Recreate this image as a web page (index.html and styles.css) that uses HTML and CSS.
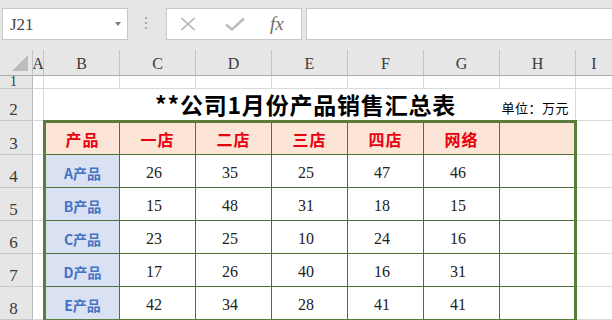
FILE: index.html
```html
<!DOCTYPE html>
<html lang="zh-CN">
<head>
<meta charset="utf-8">
<title>销售汇总表</title>
<link rel="stylesheet" href="styles.css">
</head>
<body>
<div class="toolbar">
  <div class="namebox"><span class="ref">J21</span><span class="caret"></span></div>
  <div class="dots"><i></i><i></i><i></i></div>
  <div class="fbox">
    <svg class="ic-x" width="16" height="14" viewBox="0 0 16 14"><path d="M1.5 1 L14.5 13 M14.5 1 L1.5 13" stroke="#b5b5b5" stroke-width="1.7" fill="none"/></svg>
    <svg class="ic-ok" width="20" height="14" viewBox="0 0 20 14"><path d="M1 7.5 L7 12.5 L19 1.5" stroke="#bcbcbc" stroke-width="2.4" fill="none"/></svg>
    <span class="fx">fx</span>
  </div>
  <div class="finput"></div>
</div>
<div class="sheet">
  <div class="corner"><span class="tri"></span></div>
  <div class="ch">A</div><div class="ch">B</div><div class="ch">C</div><div class="ch">D</div><div class="ch">E</div><div class="ch">F</div><div class="ch">G</div><div class="ch">H</div><div class="ch">I</div>

  <div class="rh r1">1</div>
  <div class="c"></div><div class="c"></div><div class="c"></div><div class="c"></div><div class="c"></div><div class="c"></div><div class="c"></div><div class="c"></div><div class="c"></div>

  <div class="rh">2</div>
  <div class="c"></div>
  <div class="c merged"><span></span><span class="title">**公司1月份产品销售汇总表</span><span class="unit">单位：万元</span></div>
  <div class="c"></div>

  <div class="rh">3</div><div class="c"></div><div class="c"></div>
  <div class="rh">4</div><div class="c"></div><div class="c"></div>
  <div class="rh">5</div><div class="c"></div><div class="c"></div>
  <div class="rh">6</div><div class="c"></div><div class="c"></div>
  <div class="rh">7</div><div class="c"></div><div class="c"></div>
  <div class="rh">8</div><div class="c"></div><div class="c"></div>

  <div class="table">
    <div class="t hd">产品</div><div class="t hd">一店</div><div class="t hd">二店</div><div class="t hd">三店</div><div class="t hd">四店</div><div class="t hd">网络</div><div class="t hd"></div>
    <div class="t pr">A产品</div><div class="t n">26</div><div class="t n">35</div><div class="t n">25</div><div class="t n">47</div><div class="t n">46</div><div class="t"></div>
    <div class="t pr">B产品</div><div class="t n">15</div><div class="t n">48</div><div class="t n">31</div><div class="t n">18</div><div class="t n">15</div><div class="t"></div>
    <div class="t pr">C产品</div><div class="t n">23</div><div class="t n">25</div><div class="t n">10</div><div class="t n">24</div><div class="t n">16</div><div class="t"></div>
    <div class="t pr">D产品</div><div class="t n">17</div><div class="t n">26</div><div class="t n">40</div><div class="t n">16</div><div class="t n">31</div><div class="t"></div>
    <div class="t pr last">E产品</div><div class="t n last">42</div><div class="t n last">34</div><div class="t n last">28</div><div class="t n last">41</div><div class="t n last">41</div><div class="t last"></div>
  </div>
</div>
</body>
</html>
```
FILE: styles.css
```css
html, body {
  margin: 0;
  padding: 0;
}
body {
  width: 612px;
  height: 320px;
  overflow: hidden;
  background: #ffffff;
  font-family: "Liberation Serif", serif;
}

/* ---------- formula bar ---------- */
.toolbar {
  height: 50px;
  box-sizing: border-box;
  background: #e6e6e6;
  display: flex;
  align-items: flex-start;
  padding-top: 8px;
  overflow: hidden;
}
.namebox {
  margin-left: 2px;
  width: 126px;
  height: 32px;
  box-sizing: border-box;
  border: 1px solid #c8c8c8;
  background: #ffffff;
  display: flex;
  align-items: center;
  padding-left: 7px;
  padding-right: 6px;
}
.ref {
  font-family: "Liberation Serif", serif;
  font-size: 17px;
  color: #444;
  padding-top: 2px;
}
.caret {
  margin-left: auto;
  width: 0;
  height: 0;
  border-left: 3.5px solid transparent;
  border-right: 3.5px solid transparent;
  border-top: 4px solid #7a7a7a;
}
.dots {
  margin-left: 17px;
  margin-top: 9px;
  display: flex;
  flex-direction: column;
  gap: 3px;
}
.dots i {
  display: block;
  width: 2px;
  height: 2px;
  background: #a9a9a9;
}
.fbox {
  margin-left: 19px;
  width: 136px;
  height: 32px;
  box-sizing: border-box;
  border: 1px solid #c8c8c8;
  background: #ffffff;
  display: flex;
  align-items: center;
  padding-left: 13px;
}
.ic-ok {
  margin-left: 29px;
}
.fx {
  margin-left: 25px;
  font-family: "Liberation Serif", serif;
  font-style: italic;
  font-size: 19px;
  color: #6e6e6e;
  padding-bottom: 1px;
}
.finput {
  margin-left: 4px;
  flex: 1;
  height: 32px;
  box-sizing: border-box;
  border: 1px solid #c8c8c8;
  border-right: none;
  background: #ffffff;
}

/* ---------- sheet grid ---------- */
.sheet {
  display: grid;
  grid-template-columns: 33px 11px repeat(7, 76px) 37px;
  grid-template-rows: 26px 13px 32px 34px 33px 33px 33px 33px 33px;
}
.corner {
  background: #e6e6e6;
  border-right: 1px solid #c4c4c4;
  border-bottom: 1px solid #ababab;
  box-sizing: border-box;
  position: relative;
}
.tri {
  position: absolute;
  right: 4px;
  bottom: 4px;
  width: 0;
  height: 0;
  border-left: 16px solid transparent;
  border-bottom: 16px solid #bdbdbd;
}
.ch {
  background: #e6e6e6;
  border-right: 1px solid #c4c4c4;
  border-bottom: 1px solid #ababab;
  box-sizing: border-box;
  display: flex;
  align-items: center;
  justify-content: center;
  font-size: 16px;
  color: #3a3a3a;
  padding-top: 3px;
  overflow: visible;
}
.rh {
  background: #e6e6e6;
  border-right: 1px solid #b9b9b9;
  border-bottom: 1px solid #c9c9c9;
  box-sizing: border-box;
  display: flex;
  align-items: flex-end;
  justify-content: center;
  padding-right: 5px;
  padding-bottom: 2px;
  font-size: 17px;
  line-height: 17px;
  color: #3a3a3a;
  overflow: hidden;
}
.rh.r1 {
  align-items: center;
  padding-bottom: 0;
  font-size: 14px;
  line-height: 12px;
}
.c {
  border-right: 1px solid #d9d9d9;
  border-bottom: 1px solid #d9d9d9;
  box-sizing: border-box;
}
.merged {
  grid-column: span 7;
  display: grid;
  grid-template-columns: 1fr auto 1fr;
  align-items: end;
  font-family: "Noto Sans CJK SC", sans-serif;
}
.title {
  font-size: 23px;
  line-height: 23px;
  font-weight: 700;
  letter-spacing: 0.8px;
  color: #000;
  padding-bottom: 4px;
  padding-right: 8px;
}
.unit {
  justify-self: end;
  font-size: 13px;
  line-height: 13px;
  letter-spacing: 0.5px;
  color: #000;
  padding-bottom: 6px;
  padding-right: 6px;
}

/* ---------- data table ---------- */
.table {
  grid-column: 3 / span 7;
  grid-row: 4 / span 6;
  z-index: 1;
  align-self: start;
  margin: -1px -1px 0 -1px;
  height: 202px;
  box-sizing: border-box;
  border: 3px solid #5b7d3b;
  background: #ffffff;
  display: grid;
  grid-template-columns: 74px repeat(5, 76px) 74px;
  grid-template-rows: 32px repeat(4, 33px) 32px;
}
.t {
  border-right: 1px solid #4f6f33;
  border-bottom: 1px solid #4f6f33;
  box-sizing: border-box;
  display: flex;
  align-items: center;
  justify-content: center;
}
.t:nth-child(7n) {
  border-right: none;
}
.t.last {
  border-bottom: none;
}
.hd {
  background: #fce4d6;
  color: #e8000f;
  font-family: "Noto Sans CJK SC", sans-serif;
  font-weight: 700;
  font-size: 16px;
  letter-spacing: 1px;
}
.pr {
  background: #d9e1f2;
  color: #4472c4;
  font-family: "Noto Sans CJK SC", sans-serif;
  font-weight: 700;
  font-size: 14px;
  padding-top: 3px;
}
.n {
  font-size: 16px;
  color: #222;
  padding-top: 3px;
  padding-right: 7px;
}
```
